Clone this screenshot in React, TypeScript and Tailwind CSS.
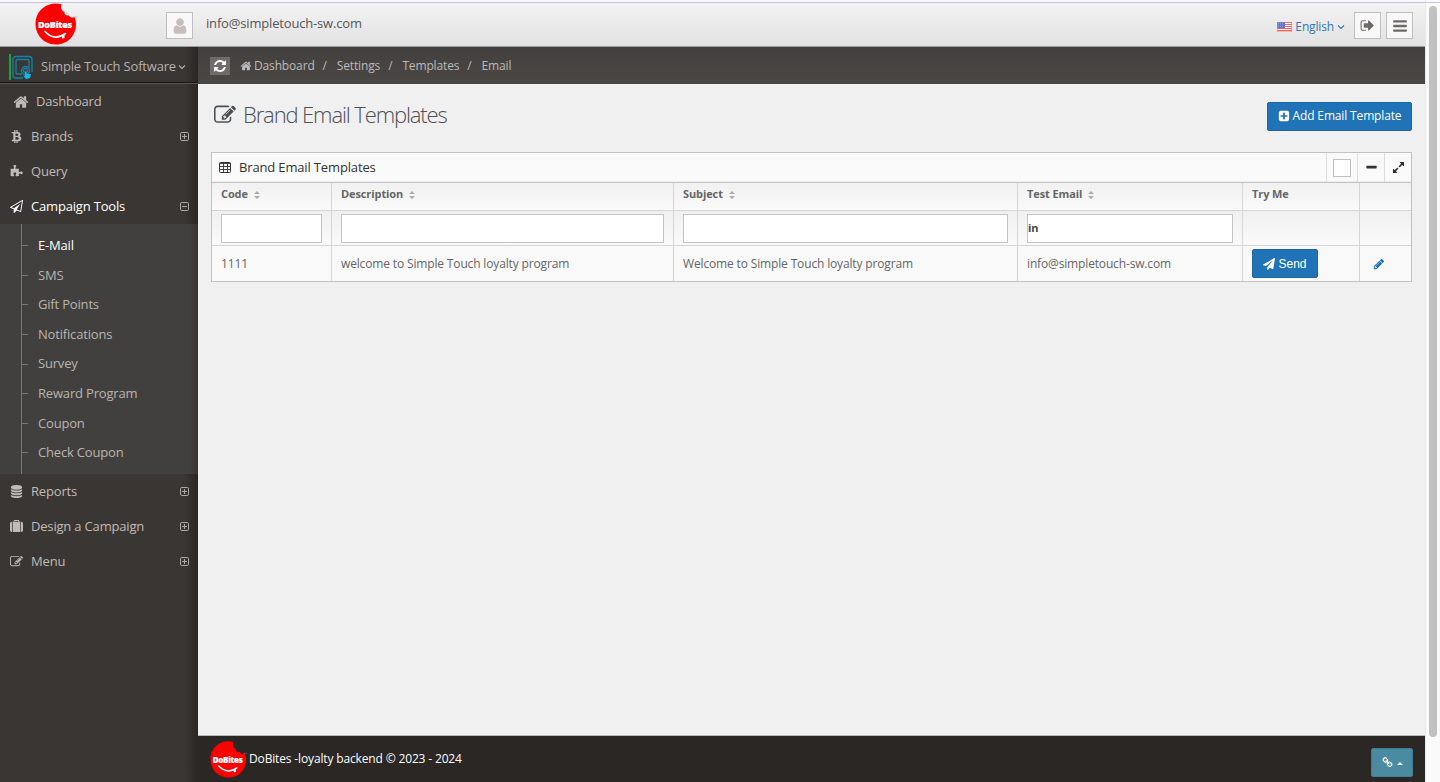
import React from 'react';
import { FaBtc } from 'react-icons/fa';

const paths = {
  home: 'M1472 992v480q0 26-19 45t-45 19h-384v-384h-256v384h-384q-26 0-45-19t-19-45v-480q0-1 .5-3t.5-3l575-474 575 474q1 2 1 6zm223-69l-62 74q-8 9-21 11h-3q-13 0-21-7l-692-577-692 577q-12 8-24 7-13-2-21-11l-62-74q-8-10-7-23.5t11-21.5l719-599q32-26 76-26t76 26l244 204v-195q0-14 9-23t23-9h192q14 0 23 9t9 23v408l219 182q10 8 11 21.5t-7 23.5z',
  edit: 'M888 1184l116-116-152-152-116 116v56h96v96h56zm440-720q-16-16-33 1l-350 350q-17 17-1 33t33-1l350-350q17-17 1-33zm80 594v190q0 119-84.5 203.5t-203.5 84.5h-832q-119 0-203.5-84.5t-84.5-203.5v-832q0-119 84.5-203.5t203.5-84.5h832q63 0 117 25 15 7 18 23 3 17-9 29l-49 49q-14 14-32 8-23-6-45-6h-832q-66 0-113 47t-47 113v832q0 66 47 113t113 47h832q66 0 113-47t47-113v-126q0-13 9-22l64-64q15-15 35-7t20 29zm-96-738l288 288-672 672h-288v-288zm444 132l-92 92-288-288 92-92q28-28 68-28t68 28l152 152q28 28 28 68t-28 68z',
  user: 'M1536 1399q0 109-62.5 187t-150.5 78h-854q-88 0-150.5-78t-62.5-187q0-85 8.5-160.5t31.5-152 58.5-131 94-89 134.5-34.5q131 128 313 128t313-128q76 0 134.5 34.5t94 89 58.5 131 31.5 152 8.5 160.5zm-256-887q0 159-112.5 271.5t-271.5 112.5-271.5-112.5-112.5-271.5 112.5-271.5 271.5-112.5 271.5 112.5 112.5 271.5z',
  refresh: 'M1639 1056q0 5-1 7-64 268-268 434.5t-478 166.5q-146 0-282.5-55t-243.5-157l-129 129q-19 19-45 19t-45-19-19-45v-448q0-26 19-45t45-19h448q26 0 45 19t19 45-19 45l-137 137q71 66 161 102t187 36q134 0 250-65t186-179q11-17 53-117 8-23 30-23h192q13 0 22.5 9.5t9.5 22.5zm25-800v448q0 26-19 45t-45 19h-448q-26 0-45-19t-19-45 19-45l138-138q-148-137-349-137-134 0-250 65t-186 179q-11 17-53 117-8 23-30 23h-199q-13 0-22.5-9.5t-9.5-22.5v-7q65-268 270-434.5t480-166.5q146 0 284 55.5t245 156.5l130-129q19-19 45-19t45 19 19 45z',
  plusSquare: 'M1408 960v-128q0-26-19-45t-45-19h-320v-320q0-26-19-45t-45-19h-128q-26 0-45 19t-19 45v320h-320q-26 0-45 19t-19 45v128q0 26 19 45t45 19h320v320q0 26 19 45t45 19h128q26 0 45-19t19-45v-320h320q26 0 45-19t19-45zm256-544v960q0 119-84.5 203.5t-203.5 84.5h-960q-119 0-203.5-84.5t-84.5-203.5v-960q0-119 84.5-203.5t203.5-84.5h960q119 0 203.5 84.5t84.5 203.5z',
  signOut: 'M704 1440q0 4 1 20t.5 26.5-3 23.5-10 19.5-20.5 6.5h-320q-119 0-203.5-84.5t-84.5-203.5v-704q0-119 84.5-203.5t203.5-84.5h320q13 0 22.5 9.5t9.5 22.5q0 4 1 20t.5 26.5-3 23.5-10 19.5-20.5 6.5h-320q-66 0-113 47t-47 113v704q0 66 47 113t113 47h312l11.5 1 11.5 3 8 5.5 7 9 2 13.5zm928-544q0 26-19 45l-544 544q-19 19-45 19t-45-19-19-45v-288h-448q-26 0-45-19t-19-45v-384q0-26 19-45t45-19h448v-288q0-26 19-45t45-19 45 19l544 544q19 19 19 45z',
  send: 'M1764 11q33 24 27 64l-256 1536q-5 29-32 45-14 8-31 8-11 0-24-5l-453-185-242 295q-18 23-49 23-13 0-22-4-19-7-30.5-23.5t-11.5-36.5v-349l864-1059-1069 925-395-162q-37-14-40-55-2-40 32-59l1664-960q15-9 32-9 20 0 36 11z',
  sendO: 'M1764 11q33 24 27 64l-256 1536q-5 29-32 45-14 8-31 8-11 0-24-5l-527-215-298 327q-18 21-47 21-14 0-23-4-19-7-30-23.5t-11-36.5v-452l-472-193q-37-14-40-55-3-39 32-59l1664-960q35-21 68 2zm-342 1499l221-1323-1434 827 336 137 863-639-478 797z',
  database: 'M896 768q237 0 443-43t325-127v170q0 69-103 128t-280 93.5-385 34.5-385-34.5-280-93.5-103-128v-170q119 84 325 127t443 43zm0 768q237 0 443-43t325-127v170q0 69-103 128t-280 93.5-385 34.5-385-34.5-280-93.5-103-128v-170q119 84 325 127t443 43zm0-384q237 0 443-43t325-127v170q0 69-103 128t-280 93.5-385 34.5-385-34.5-280-93.5-103-128v-170q119 84 325 127t443 43zm0-1152q208 0 385 34.5t280 93.5 103 128v128q0 69-103 128t-280 93.5-385 34.5-385-34.5-280-93.5-103-128v-128q0-69 103-128t280-93.5 385-34.5z',
  suitcase: 'M640 256h512v-128h-512v128zm-352 0v1408h-64q-92 0-158-66t-66-158v-960q0-92 66-158t158-66h64zm1120 0v1408h-1024v-1408h128v-160q0-40 28-68t68-28h576q40 0 68 28t28 68v160h128zm384 224v960q0 92-66 158t-158 66h-64v-1408h64q92 0 158 66t66 158z',
  pencil: 'M491 1536l91-91-235-235-91 91v107h128v128h107zm523-928q0-22-22-22-10 0-17 7l-542 542q-7 7-7 17 0 22 22 22 10 0 17-7l542-542q7-7 7-17zm-54-192l416 416-832 832h-416v-416zm683 96q0 53-37 90l-166 166-416-416 166-165q36-38 90-38 53 0 91 38l235 234q37 39 37 91z',
  expand: 'M883 1056q0 13-10 23l-332 332 144 144q19 19 19 45t-19 45-45 19h-448q-26 0-45-19t-19-45v-448q0-26 19-45t45-19 45 19l144 144 332-332q10-10 23-10t23 10l114 114q10 10 10 23zm781-864v448q0 26-19 45t-45 19-45-19l-144-144-332 332q-10 10-23 10t-23-10l-114-114q-10-10-10-23t10-23l332-332-144-144q-19-19-19-45t19-45 45-19h448q26 0 45 19t19 45z',
  puzzle: 'M1755 1083q0 81-44.5 135t-123.5 54q-41 0-77.5-17.500t-59-38-56.500-38-71-17.500q-110 0-110 124 0 39 16 115t15 115v5q-22 0-33 1-34 3-97.500 11.500t-115.500 13.500-98 5q-61 0-103-26.500t-42-83.500q0-37 17.500-71t38-56.500 38-59 17.500-77.500q0-79-54-123.500t-135-44.500q-84 0-143 45.500t-59 127.500q0 43 15 83t33.500 64.500 33.500 53 15 50.500q0 45-46 89-37 35-117 35-95 0-245-24-9-2-27.500-4t-27.500-4l-13-2q-1 0-3-1-2 0-2-1v-1024q2 1 17.500 3.500t34 5 21.500 3.500q150 24 245 24 80 0 117-35 46-44 46-89 0-22-15-50.500t-33.500-53-33.500-64.500-15-83q0-82 59-127.500t144-45.500q80 0 134 44.500t54 123.500q0 41-17.500 77.500t-38 59-38 56.500-17.500 71q0 57 42 83.500t103 26.500q64 0 180-15t163-17v2q-1 2-3.500 17.500t-5 34-3.500 21.500q-24 150-24 245 0 80 35 117 44 46 89 46 22 0 50.500-15t53-33.500 64.500-33.500 83-15q82 0 127.500 59t45.500 143z',
  link: 'M1520 1216q0-40-28-68l-208-208q-28-28-68-28-42 0-72 32 3 3 19 18.5t21.5 21.5 15 19 13 25.5 3.5 27.5q0 40-28 68t-68 28q-15 0-27.5-3.5t-25.5-13-19-15-21.5-21.5-18.5-19q-33 31-33 73 0 40 28 68l206 207q27 27 68 27 40 0 68-26l147-146q28-28 28-67zm-703-705q0-40-28-68l-206-207q-28-28-68-28-39 0-68 27l-147 146q-28 28-28 67 0 40 28 68l208 208q27 27 68 27 42 0 72-31-3-3-19-18.5t-21.5-21.5-15-19-13-25.5-3.5-27.5q0-40 28-68t68-28q15 0 27.5 3.5t25.5 13 19 15 21.5 21.5 18.5 19q33-31 33-73zm895 705q0 120-85 203l-147 146q-83 83-203 83-121 0-204-85l-206-207q-83-83-83-203 0-123 88-209l-88-88q-86 88-208 88-120 0-204-84l-208-208q-84-84-84-204t85-203l147-146q83-83 203-83 121 0 204 85l206 207q83 83 83 203 0 123-88 209l88 88q86-88 208-88 120 0 204 84l208 208q84 84 84 204z',
  minus: 'M1600 736v192q0 40-28 68t-68 28H288q-40 0-68-28t-28-68V736q0-40 28-68t68-28h1216q40 0 68 28t28 68z',
  bars: 'M1664 1344v128q0 26-19 45t-45 19H192q-26 0-45-19t-19-45v-128q0-26 19-45t45-19h1408q26 0 45 19t19 45zm0-512v128q0 26-19 45t-45 19H192q-26 0-45-19t-19-45V832q0-26 19-45t45-19h1408q26 0 45 19t19 45zm0-512v128q0 26-19 45t-45 19H192q-26 0-45-19t-19-45V320q0-26 19-45t45-19h1408q26 0 45 19t19 45z',
};

type IconName = keyof typeof paths;

function Icon({ name, className }: { name: IconName; className: string }) {
  return (
    <svg viewBox="0 0 1792 1792" fill="currentColor" className={`shrink-0 ${className}`}>
      <path d={paths[name]} />
    </svg>
  );
}

function Logo({ className, textColor = '#999' }: { className: string; textColor?: string }) {
  return (
    <svg viewBox="0 0 42 42" className={`shrink-0 overflow-visible ${className}`}>
      <path
        d="M26.5 1.2C15-2 3 5 .9 16.500C-1.500 29 7 41.500 21 41.500c12 0 20.200-9.500 20-20.500-.1-3-.6-5-1.500-7-2 1-4.500.6-5.500-1.500-3 .5-5-1-4.500-3.500-3-1-4-4.500-3-7.800z"
        fill="#fe0000"
      />
      <text
        x="20"
        y="24.800"
        textAnchor="middle"
        fontSize="9"
        fontWeight="800"
        fontFamily="'Open Sans', sans-serif"
        fill="#fff"
        stroke="#fff"
        strokeWidth=".2"
        letterSpacing="-.25"
      >
        DoBites
      </text>
      <path d="M10 28.500q9.500 10 20.500 2" fill="none" stroke="#fff" strokeWidth="1.600" strokeLinecap="round" />
      <path d="M26.500 33l.8 2.500q1.700.2 2.300-1.200l-.3-4z" fill="#fff" />
      <path d="M38.500 14h1.400M40.600 14h1.200" stroke={textColor} strokeWidth="1" />
    </svg>
  );
}

function Chevron({ className }: { className: string }) {
  return (
    <svg viewBox="0 0 8 6" fill="none" stroke="currentColor" strokeWidth="1.100" className={className}>
      <path d="M1 1.500l3 3 3-3" />
    </svg>
  );
}

function BoxToggle({ open }: { open?: boolean }) {
  return (
    <svg viewBox="0 0 9 9" fill="none" stroke="currentColor" strokeWidth="1" className="h-[9px] w-[9px]">
      <rect x="0.500" y="0.500" width="8" height="8" rx="1.300" />
      <path d={open ? 'M2 4.500h5' : 'M2 4.500h5M4.500 2v5'} />
    </svg>
  );
}

function Flag() {
  return (
    <svg viewBox="0 0 15 10" className="mr-[3px] h-2.5 w-[15px]">
      <rect width="15" height="10" fill="#fff" />
      {[0, 2, 4, 6, 8].map((y) => (
        <rect key={y} y={y} width="15" height="1.100" fill="#f0655f" />
      ))}
      <rect width="8" height="6" fill="#5872d8" />
      <path d="M1 1.500h6M1 3h6M1 4.500h6" stroke="#a9b8f0" strokeWidth=".6" strokeDasharray="1 1" />
      <rect x=".25" y=".25" width="14.500" height="9.500" fill="none" stroke="#d98080" strokeWidth=".5" />
    </svg>
  );
}

function BrandMark() {
  return (
    <svg viewBox="0 0 24 26" className="h-[26px] w-6 shrink-0">
      <path d="M1 0v26" stroke="#12a83c" strokeWidth="2" />
      <g fill="none" stroke="#1583ab" strokeWidth="1.300">
        <path d="M14 24H7q-3 0-3-3V5.500q0-3 3-3h13q3 0 3 3V18" />
        <path d="M13 20H8.500Q7 20 7 18.500V7q0-1.500 1.500-1.500h10Q20 5.500 20 7v7" />
        <circle cx="16.500" cy="16.500" r="4" />
        <circle cx="16.500" cy="16.500" r="2" />
      </g>
      <path d="M16 16.500l1.500 3 4.500.7-1 3.800-4 1-3-3.500 2 .3z" fill="#11b7ef" />
    </svg>
  );
}

function Sort() {
  return (
    <svg viewBox="0 0 6 8" fill="#aaa" className="ml-[6px] h-2 w-1.5">
      <path d="M0 3l3-3 3 3zM0 5l3 3 3-3z" />
    </svg>
  );
}

const subItems = ['E-Mail', 'SMS', 'Gift Points', 'Notifications', 'Survey', 'Reward Program', 'Coupon', 'Check Coupon'];
const crumbs = ['Settings', 'Templates', 'Email'];
const columns = ['Code', 'Description', 'Subject', 'Test Email'];

interface NavItemProps {
  label: string;
  icon: React.ReactNode;
  expandable?: boolean;
  open?: boolean;
}

function NavItem({ label, icon, expandable, open }: NavItemProps) {
  return (
    <a className={`flex h-[35px] items-center pl-[9px] pr-[9px] ${open ? 'text-white' : 'text-[#c0bbb7]'}`}>
      <span className="mr-[7px] flex min-w-[15px] justify-center">{icon}</span>
      <span className="flex-1">{label}</span>
      {expandable && (
        <span className="text-[#aca7a4]">
          <BoxToggle open={open} />
        </span>
      )}
    </a>
  );
}

function Sidebar() {
  return (
    <aside className="w-[198px] shrink-0 bg-[#3a3633] bg-[linear-gradient(to_right,transparent_184px,#292624_198px)] text-[13px] tracking-[-0.18px]">
      <div className="flex h-[37px] items-center border-b border-[#5b5754] pl-[9px] pt-[3px] text-[#b7b1ad] shadow-[inset_0_-1px_0_#151413]">
        <BrandMark />
        <span className="ml-2 whitespace-nowrap">Simple Touch Software</span>
        <Chevron className="ml-[2px] h-1.5 w-2" />
      </div>
      <nav>
        <a className="flex h-[35px] items-center pl-[13px] text-[#c0bbb7]">
          <Icon name="home" className="mr-[7px] h-4 w-4" />
          Dashboard
        </a>
        <NavItem label="Brands" icon={<FaBtc className="h-[13px] w-[13px]" />} expandable />
        <NavItem label="Query" icon={<Icon name="puzzle" className="h-[13px] w-[13px]" />} />
        <NavItem label="Campaign Tools" icon={<Icon name="sendO" className="h-[13px] w-[13px]" />} expandable open />
        <div className="h-[250px] bg-[#41403e] bg-[linear-gradient(to_right,transparent_190px,#343331_198px)] pl-[21px]">
          <ul className="h-full border-l border-[#7a7876] pt-[7px]">
            {subItems.map((item, i) => (
              <li
                key={item}
                className={`flex h-[29.6px] items-center ${i === 0 ? 'text-white' : 'text-[#b9b4b0]'}`}
              >
                <span className="mr-[10px] h-px w-1.5 bg-[#7a7876]" />
                {item}
              </li>
            ))}
          </ul>
        </div>
        <NavItem label="Reports" icon={<Icon name="database" className="h-[13px] w-[13px]" />} expandable />
        <NavItem label="Design a Campaign" icon={<Icon name="suitcase" className="h-[13px] w-[13px]" />} expandable />
        <NavItem label="Menu" icon={<Icon name="edit" className="h-[13px] w-[13px]" />} expandable />
      </nav>
    </aside>
  );
}

function Header() {
  return (
    <header className="flex h-[45px] shrink-0 items-center border-b border-[#9d9d9d] bg-linear-to-b from-[#f3f3f3] to-[#e2e2e2] pr-3">
      <Logo className="ml-[35px] h-[42px] w-[42px]" />
      <div className="ml-[89px] mt-[3px] flex h-[27px] w-[27px] items-center justify-center border border-[#bfbfbf] bg-[#f8f8f8]">
        <Icon name="user" className="h-[18px] w-[18px] text-[#c8bebb]" />
      </div>
      <span className="ml-[13px] text-[13px] tracking-[-0.17px] text-[#555]">info@simpletouch-sw.com</span>
      <div className="ml-auto mt-[3px] flex items-center">
        <a className="mr-[9px] flex items-center pt-[2px] text-[12px] text-[#3276b1]">
          <Flag />
          English
          <Chevron className="ml-[3px] h-1.5 w-2" />
        </a>
        <button className="mr-[5px] flex h-[27px] w-[27px] items-center justify-center border border-[#bfbfbf] bg-[#f8f8f8] text-[#6d6a69]">
          <Icon name="signOut" className="h-[15px] w-[15px]" />
        </button>
        <button className="flex h-[27px] w-[27px] items-center justify-center border border-[#bfbfbf] bg-[#f8f8f8] text-[#6d6a69]">
          <Icon name="bars" className="h-4 w-4" />
        </button>
      </div>
    </header>
  );
}

function Ribbon() {
  return (
    <div className="flex h-[37px] items-center bg-linear-to-b from-[#42403e] to-[#4b4745] pl-3 text-[12px] text-[#bbb]">
      <span className="mr-2.5 flex h-[18px] w-5 items-center justify-center bg-[#6e6b69] text-white">
        <Icon name="refresh" className="h-[14px] w-[14px]" />
      </span>
      <Icon name="home" className="mr-[2px] h-3 w-3" />
      <span>Dashboard</span>
      {crumbs.map((crumb) => (
        <React.Fragment key={crumb}>
          <span className="ml-2 mr-[10px]">/</span>
          <span>{crumb}</span>
        </React.Fragment>
      ))}
    </div>
  );
}

const grid = 'grid grid-cols-[120px_342px_344px_225px_117px_51px]';
const cell = 'border-r border-[#d5d5d5] px-[9px]';

function TemplatesTable() {
  return (
    <section className="border border-[#c2c2c2] bg-[#fafafa]">
      <div className="flex h-[30px] items-stretch border-b border-[#c2c2c2] text-[#333] shadow-[inset_0_-1px_0_#eee]">
        <div className="flex flex-1 items-center pl-[7px] text-[13px]">
          <svg viewBox="0 0 12 11" className="mr-2 h-[11px] w-3" fill="none" stroke="currentColor">
            <rect x=".5" y=".5" width="11" height="10" rx="1" />
            <path d="M0 1.500h12M0 4.500h12M0 7.500h12M4.500 1v10M8.500 1v10" strokeWidth=".9" />
          </svg>
          Brand Email Templates
        </div>
        <div className="flex w-[31px] items-center justify-center border-l border-[#ddd]">
          <span className="mt-px h-[18px] w-[18px] border border-[#bfbfbf] bg-white" />
        </div>
        <div className="flex w-[27px] items-center justify-center border-l border-[#ddd]">
          <Icon name="minus" className="h-[13px] w-[13px]" />
        </div>
        <div className="flex w-[27px] items-center justify-center border-l border-[#ddd] pb-px">
          <Icon name="expand" className="h-[13px] w-[13px]" />
        </div>
      </div>
      <div className={`${grid} h-7 border-b border-[#d5d5d5] bg-linear-to-b from-[#f1f1f1] to-[#fafafa] text-[11px] font-bold tracking-[-0.1px] text-[#666]`}>
        {columns.map((title) => (
          <div key={title} className={`${cell} flex items-center pb-1`}>
            {title}
            <Sort />
          </div>
        ))}
        <div className={`${cell} flex items-center pb-1`}>Try Me</div>
        <div />
      </div>
      <div className={`${grid} h-[35px] border-b border-[#d5d5d5] bg-linear-to-b from-[#f0f0f0] to-[#fafafa]`}>
        {columns.map((title) => (
          <div key={title} className={`${cell} pt-[3px]`}>
            <input
              defaultValue={title === 'Test Email' ? 'in' : ''}
              className="block h-[29px] w-full border border-[#c4c4c4] bg-white pb-0.5 text-[11px] font-bold text-[#444] outline-none"
            />
          </div>
        ))}
        <div className={cell} />
        <div />
      </div>
      <div className={`${grid} h-[35px] items-stretch bg-[#f9f9f9] text-[12px] text-[#666]`}>
        <div className={`${cell} flex items-center`}>1111</div>
        <div className={`${cell} flex items-center`}>welcome to Simple Touch loyalty program</div>
        <div className={`${cell} flex items-center`}>Welcome to Simple Touch loyalty program</div>
        <div className={`${cell} flex items-center`}>info@simpletouch-sw.com</div>
        <div className={`${cell} flex items-center`}>
          <button className="flex h-[29px] w-[66px] items-center justify-center gap-[3px] rounded-[2px] border border-[#1f65a0] bg-[#2073b6] font-['Liberation_Sans',sans-serif] text-[12px] tracking-normal text-white">
            <Icon name="send" className="h-3 w-3" />
            Send
          </button>
        </div>
        <div className="flex items-center pl-[13px]">
          <Icon name="pencil" className="h-3 w-3 text-[#2073b6]" />
        </div>
      </div>
    </section>
  );
}

export default function App() {
  return (
    <div className="flex h-[782px] w-[1440px] overflow-hidden bg-[#fafafa] font-['Open_Sans',sans-serif] tracking-[-0.15px]">
      <div className="flex w-[1425px] shrink-0 flex-col">
        <div className="h-[2px] shrink-0 bg-[#f8f8fe]" />
        <Header />
        <div className="flex min-h-0 flex-1">
          <Sidebar />
          <div className="flex min-w-0 flex-1 flex-col">
            <Ribbon />
            <main className="flex-1 bg-[#f0f0f0] px-[13px]">
              <div className="flex h-[68px] items-center justify-between pb-1">
                <h1 className="flex items-center pb-[3px] pl-[3px] text-[22px] font-light tracking-[-1.12px] text-[#4c4f53]">
                  <Icon name="edit" className="mr-[7px] h-[22px] w-[22px]" />
                  Brand Email Templates
                </h1>
                <button className="flex h-[29px] w-[145px] items-center justify-center gap-[3px] rounded-[2px] border border-[#1f65a0] bg-[#2073b6] text-[12px] text-white">
                  <Icon name="plusSquare" className="h-3 w-3" />
                  Add Email Template
                </button>
              </div>
              <TemplatesTable />
            </main>
            <footer className="flex h-[47px] items-center border-t border-[#bbb] bg-[#2a2725] pl-3 pr-3 text-[12px] text-white">
              <Logo className="h-[37px] w-[37px]" textColor="#777" />
              <span className="ml-[2px]">DoBites -loyalty backend © 2023 - 2024</span>
              <button className="ml-auto mt-[7px] flex h-[29px] w-[42px] items-center justify-center gap-1 rounded-[2px] border border-[#437f92] bg-[#4a8ba1]">
                <Icon name="link" className="h-[11px] w-[11px]" />
                <svg viewBox="0 0 6 3" fill="currentColor" className="mt-px h-[3px] w-1.5">
                  <path d="M0 3l3-3 3 3z" />
                </svg>
              </button>
            </footer>
          </div>
        </div>
      </div>
      <div className="w-[15px] border-l border-[#e8e8e8] pl-[3px] pt-[6px]">
        <div className="h-[731px] w-2 rounded-full bg-[#c1c1c1]" />
      </div>
      {/* window edge line across the full width */}
      <div className="pointer-events-none absolute left-0 top-[2px] h-px w-[1440px] bg-[#c5c4e0]" />
    </div>
  );
}
